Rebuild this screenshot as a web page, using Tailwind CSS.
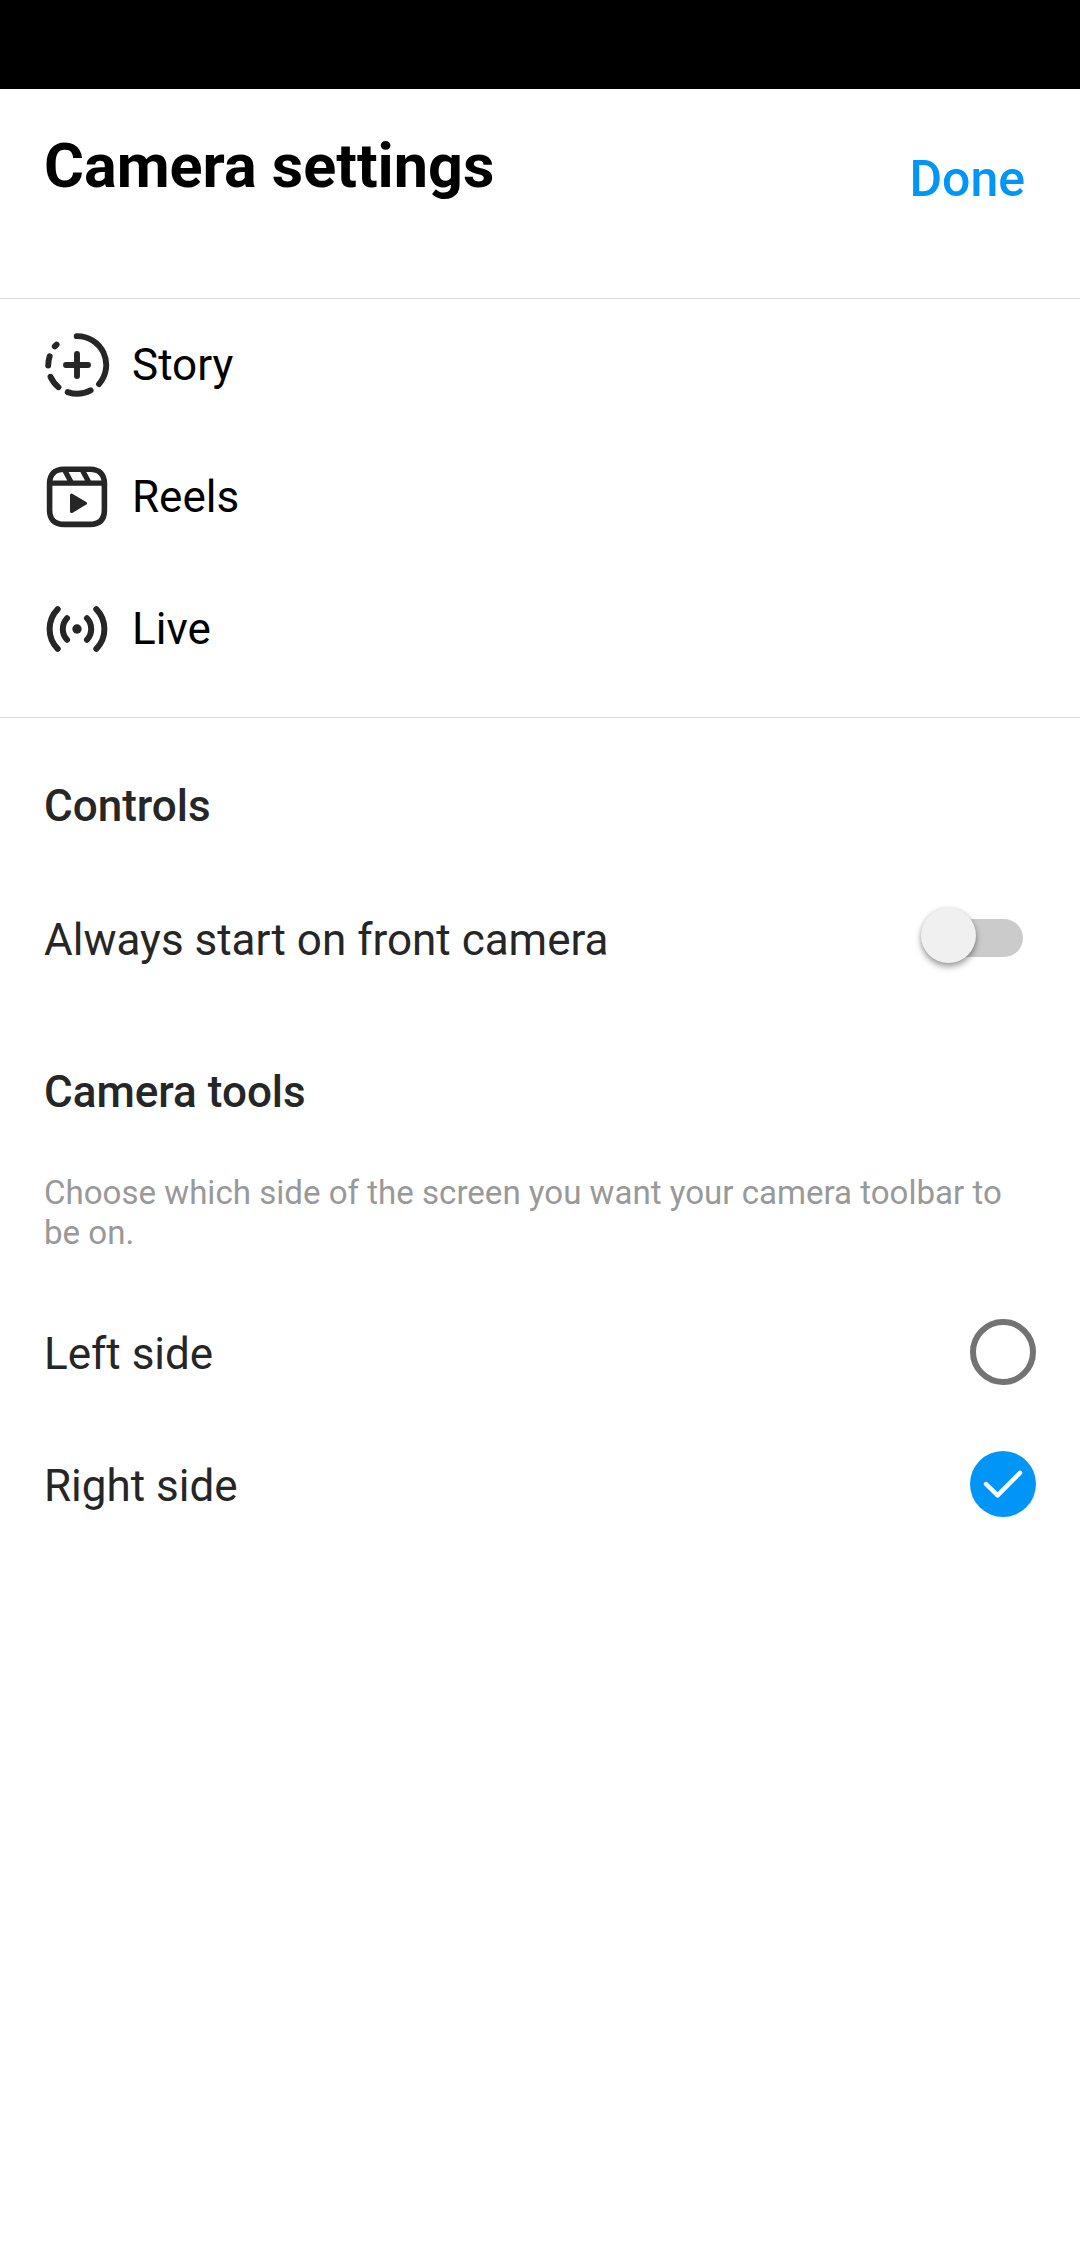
<!DOCTYPE html>
<html lang="en"><head><meta charset="utf-8"><title>Camera settings</title>
<script src="https://cdn.jsdelivr.net/npm/@tailwindcss/browser@4"></script></head>
<body class="bg-white font-['Roboto',sans-serif] text-black">
<main class="flex h-[2246px] w-[1080px] flex-col overflow-hidden">
<div class="h-[89px] shrink-0 bg-black"></div>
<header class="flex h-[210px] shrink-0 items-start justify-between border-b border-[#dbdbdb] pr-[55px] pl-11">
<h1 class="pt-[41px] text-[61.1px] leading-[72px] font-bold whitespace-nowrap">Camera settings</h1>
<button class="pt-[60px] text-[50px] leading-[60px] font-medium text-[#0095f6]">Done</button>
</header>
<section class="flex h-[419px] shrink-0 flex-col border-b border-[#dbdbdb] px-11">
<div class="flex h-[132px] items-center gap-[22px] text-[44px]">
<svg class="size-[66px]" viewBox="0 0 66 66" fill="none" stroke="#262626" stroke-width="5.9" stroke-linecap="round"><path d="M32.7 4.1A28.9 28.9 0 0 1 55 52.1M46.6 58.4A28.9 28.9 0 0 1 23.7 60.1M14.5 55.2A28.9 28.9 0 0 1 6.5 44.7M4.2 33.5A28.9 28.9 0 0 1 5.7 24.2M10.8 14.4L12.6 12.6M33 22v22M22 33h22"/></svg>Story</div>
<div class="flex h-[132px] items-center gap-[22px] text-[44px]">
<svg class="size-[66px]" viewBox="0 0 66 66" fill="none" stroke="#262626" stroke-width="5.6" stroke-linejoin="round"><path d="M20 5.2H46C55.5 5.2 60.4 10.5 60.4 19.5V46C60.4 55.5 55.5 60.4 46 60.4H20C10.5 60.4 5.6 55.5 5.6 46V19.5C5.6 10.5 10.5 5.2 20 5.2Z"/><path d="M5.6 19.2h54.8M20.3 5.4l7.4 13.8M38 5.4l7.4 13.8" stroke-width="5.2"/><path d="M27.5 31v16.6l14-8.3z" fill="#262626" stroke-width="3"/></svg>Reels</div>
<div class="flex h-[132px] items-center gap-[22px] text-[44px]">
<svg class="size-[66px]" viewBox="0 0 66 66" fill="none" stroke="#262626" stroke-width="6" stroke-linecap="round"><circle cx="33" cy="33" r="4.7" fill="#262626" stroke="none"/><path d="M13.7 13.1a28.5 28.5 0 0 0 0 39.8M52.3 13.1a28.5 28.5 0 0 1 0 39.8M23 22.3a15.7 15.7 0 0 0 0 21.4M43 22.3a15.7 15.7 0 0 1 0 21.4"/></svg>Live</div>
</section>
<section class="flex flex-col px-11 text-[44px] leading-[52px] text-[#262626]">
<h2 class="pt-[62px] font-medium">Controls</h2>
<div class="flex h-[216px] items-center justify-between pr-[13px]"><span>Always start on front camera</span>
<span class="relative mb-1 h-[38px] w-[94px] rounded-full bg-[#cbcbcb]"><span class="absolute -top-[11px] -left-[8px] size-[55px] rounded-full bg-[#f0f0f0] shadow-[0_4px_6px_rgba(0,0,0,0.35),0_0_4px_rgba(0,0,0,0.12)]"></span></span></div>
<h2 class="pt-[18px] font-medium">Camera tools</h2>
<p class="mt-[55px] text-[33.1px] leading-[40px] whitespace-nowrap text-[#999]">Choose which side of the screen you want your camera toolbar to<br>be on.</p>
<div class="mt-[33px] flex h-[132px] items-center justify-between"><span class="pt-1">Left side</span><span class="size-[66px] rounded-full border-6 border-[#737373]"></span></div>
<div class="flex h-[132px] items-center justify-between"><span class="pt-1">Right side</span>
<svg class="size-[66px]" viewBox="0 0 66 66" fill="none"><circle cx="33" cy="33" r="33" fill="#0095f6"/><path d="M16 33l11.6 11.4L50 21.9" stroke="#fff" stroke-width="4.4" stroke-linecap="round" stroke-linejoin="round"/></svg></div>
</section>
</main></body></html>
